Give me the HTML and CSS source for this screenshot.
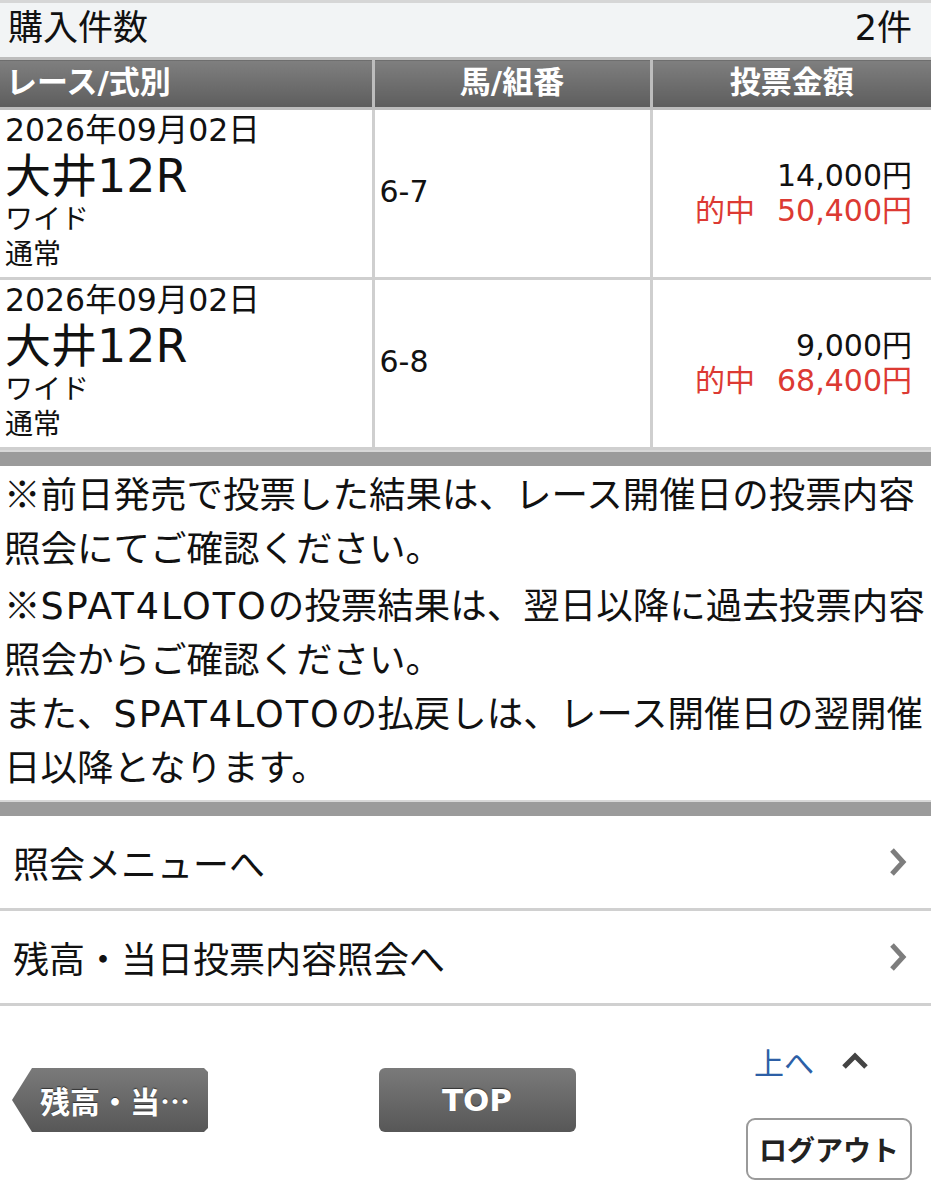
FILE: index.html
```html
<!DOCTYPE html>
<html lang="ja">
<head>
<meta charset="utf-8">
<title>投票内容照会</title>
<link rel="stylesheet" href="styles.css">
</head>
<body>
<div class="page">
  <div class="topline"></div>
  <div class="count-row"><span>購入件数</span><span>2件</span></div>
  <table class="bets">
    <colgroup><col class="w1"><col class="w2"><col class="w3"></colgroup>
    <thead>
      <tr><th class="th-left">レース/式別</th><th>馬/組番</th><th>投票金額</th></tr>
    </thead>
    <tbody>
      <tr>
        <td class="race">
          <div class="date">2026年09月02日</div>
          <div class="venue">大井12R</div>
          <div class="kind">ワイド</div>
          <div class="kind2">通常</div>
        </td>
        <td class="combo">6-7</td>
        <td class="amount">
          <div>14,000円</div>
          <div class="hit"><span class="hit-label">的中</span>50,400円</div>
        </td>
      </tr>
      <tr>
        <td class="race">
          <div class="date">2026年09月02日</div>
          <div class="venue">大井12R</div>
          <div class="kind">ワイド</div>
          <div class="kind2">通常</div>
        </td>
        <td class="combo">6-8</td>
        <td class="amount">
          <div>9,000円</div>
          <div class="hit"><span class="hit-label">的中</span>68,400円</div>
        </td>
      </tr>
    </tbody>
  </table>
  <div class="sep"></div>
  <div class="notes">
    <p><span class="cjk">※</span>前日発売で投票した結果は、レース開催日の投票内容<br>照会にてご確認ください。</p>
    <p><span class="cjk">※</span><span class="latin">SPAT4LOTO</span>の投票結果は、翌日以降に過去投票内容<br>照会からご確認ください。</p>
    <p>また、<span class="latin">SPAT4LOTO</span>の払戻しは、レース開催日の翌開催<br>日以降となります。</p>
  </div>
  <div class="sep"></div>
  <ul class="menu">
    <li class="menu-item"><span>照会メニューへ</span>
      <svg class="chev" viewBox="0 0 18 30" width="18" height="30"><polyline points="3,3 14,15 3,27" fill="none" stroke="#7d7d7d" stroke-width="5" stroke-linejoin="miter"/></svg>
    </li>
    <li class="menu-item"><span>残高・当日投票内容照会へ</span>
      <svg class="chev" viewBox="0 0 18 30" width="18" height="30"><polyline points="3,3 14,15 3,27" fill="none" stroke="#7d7d7d" stroke-width="5" stroke-linejoin="miter"/></svg>
    </li>
  </ul>
  <div class="footer">
    <div class="btn-back">残高・当<span class="cjk">…</span></div>
    <div class="btn-top">TOP</div>
    <div class="right-col">
      <div class="to-top"><span class="to-top-link">上へ</span>
        <svg class="up" viewBox="0 0 30 18" width="30" height="18"><polyline points="4,15 15,4 26,15" fill="none" stroke="#444" stroke-width="5"/></svg>
      </div>
      <div class="btn-logout">ログアウト</div>
    </div>
  </div>
</div>
</body>
</html>
```
FILE: styles.css
```css
* { box-sizing: border-box; }
html, body { margin: 0; padding: 0; background: #fff; }
body {
  font-family: "DejaVu Sans", "Noto Sans CJK JP", sans-serif;
  color: #111;
  width: 931px;
}
.cjk { font-family: "Noto Sans CJK JP", sans-serif; }
.latin { letter-spacing: 2px; }
.page { width: 931px; }
.topline { height: 3px; background: #d6d6d6; }
.count-row {
  height: 54px;
  background: #f2f4f5;
  display: flex;
  justify-content: space-between;
  align-items: center;
  padding: 0 19px 4px 8px;
  font-size: 35px;
  line-height: 1;
}
.bets {
  width: 931px;
  border-collapse: collapse;
  table-layout: fixed;
}
.w1 { width: 373px; }
.w2 { width: 278px; }
.w3 { width: 280px; }
.bets th, .bets td { border: 3px solid #cfcfcf; padding: 0; }
.bets tr > :first-child { border-left: 0; }
.bets tr > :last-child { border-right: 0; }
.bets th {
  height: 50px;
  background: linear-gradient(#7f7f7f, #5d5d5d);
  color: #fff;
  font-size: 31px;
  font-weight: bold;
  text-align: center;
  border-color: #bdbdbd;
  line-height: 1;
  padding-bottom: 2px;
}
.bets th.th-left { text-align: left; padding-left: 6px; }
.bets td { height: 170px; vertical-align: middle; }
.race { padding: 2px 0 3px 5px !important; vertical-align: top !important; }
.date { font-size: 31.5px; line-height: 36px; }
.venue { font-size: 46px; line-height: 56px; }
.kind { font-size: 28px; line-height: 32px; }
.kind2 { font-size: 28px; line-height: 38px; }
.combo { font-size: 30px; padding-left: 5px !important; padding-bottom: 4px !important; }
.amount { text-align: right; padding: 0 19px 2px 0 !important; font-size: 30px; line-height: 35px; }
.hit { color: #dc3a33; }
.hit-label { margin-right: 22px; }
.sep { height: 16px; background: #9b9b9b; border-top: 2px solid #d8d8d8; }
.notes { padding: 0 0 4px 4px; font-size: 36.5px; line-height: 54px; }
.notes p { margin: 0; white-space: nowrap; }
.menu { list-style: none; margin: 0; padding: 0; }
.menu-item {
  height: 95px;
  border-bottom: 3px solid #d0d0d0;
  display: flex;
  align-items: center;
  justify-content: space-between;
  padding: 0 24px 0 13px;
  font-size: 36px;
}
.footer {
  display: flex;
  justify-content: space-between;
  align-items: flex-start;
  padding: 0 19px 0 12px;
}
.btn-back, .btn-top {
  margin-top: 62px;
  height: 64px;
  color: #fff;
  font-weight: bold;
  font-size: 30px;
  display: flex;
  align-items: center;
  background: linear-gradient(#7a7a7a, #575757);
  text-shadow: 0 -1px 1px #333;
}
.btn-back {
  width: 196px;
  padding-left: 28px;
  clip-path: polygon(20px 0, 192px 0, 196px 4px, 196px 60px, 192px 64px, 20px 64px, 0 32px);
}
.btn-top {
  width: 197px;
  justify-content: center;
  border-radius: 6px;
  font-size: 31px;
}
.right-col { width: 166px; display: flex; flex-direction: column; }
.to-top {
  margin-top: 35px;
  padding-left: 8px;
  display: flex;
  align-items: center;
  gap: 26px;
  height: 40px;
}
.to-top-link { color: #2d5fa6; font-size: 30px; }
.btn-logout {
  margin-top: 37px;
  height: 62px;
  border: 2px solid #9a9a9a;
  border-radius: 9px;
  background: #fff;
  display: flex;
  align-items: center;
  justify-content: center;
  font-size: 28px;
  font-weight: bold;
  color: #222;
}
```
